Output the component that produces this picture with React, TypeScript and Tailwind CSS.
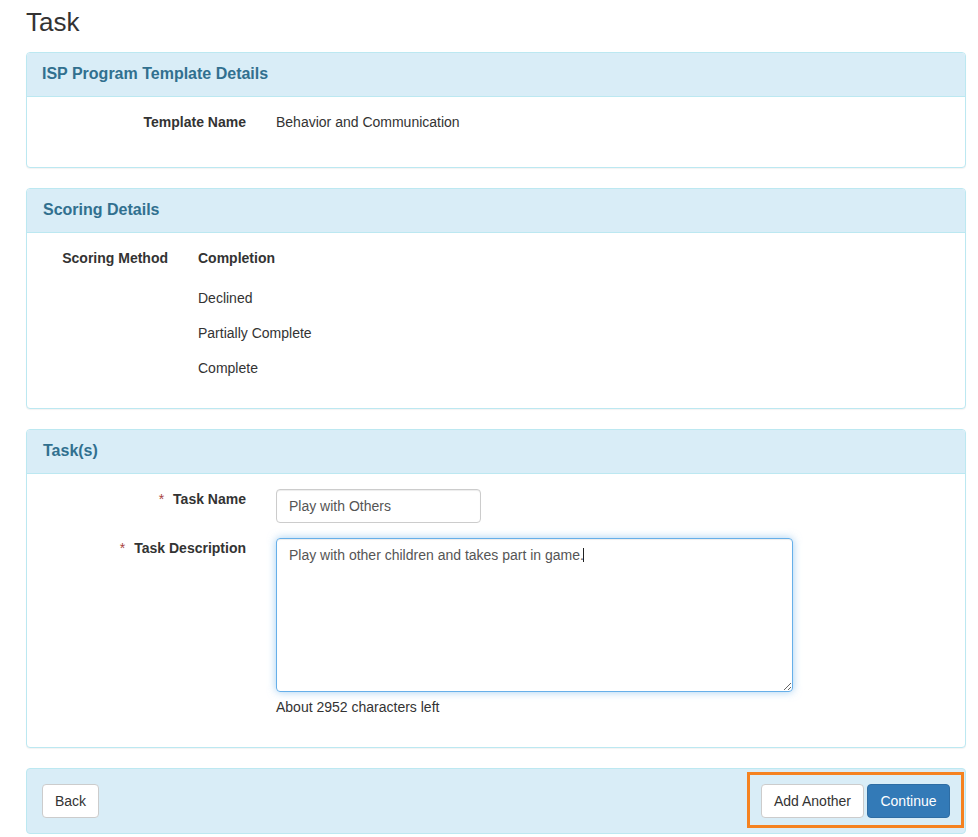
import { ReactNode } from 'react';

const font = "font-['Liberation_Sans',Arial,sans-serif]";

function Panel({ title, className, titleClass, children }: { title: string; className?: string; titleClass?: string; children: ReactNode }) {
  return (
    <section className={`rounded border border-[#bce8f1] bg-white shadow-[0_1px_1px_rgba(0,0,0,0.05)] ${className ?? ''}`}>
      <h2 className={`h-[44px] rounded-t-[3px] border-b border-[#bce8f1] bg-[#d9edf7] pt-[11px] text-base leading-[20px] font-bold text-[#31708f] ${titleClass ?? 'pl-[15px]'}`}>
        {title}
      </h2>
      {children}
    </section>
  );
}

function Required() {
  return <span className="mr-[9px] font-normal text-[#a94442]">*</span>;
}

function Button({ children, primary, className }: { children: ReactNode; primary?: boolean; className?: string }) {
  return (
    <button
      type="button"
      className={`h-[34px] whitespace-nowrap rounded border text-sm ${
        primary ? 'border-[#2e6da4] bg-[#337ab7] text-white' : 'border-[#ccc] bg-white text-[#333]'
      } ${className ?? 'px-3'}`}
    >
      {children}
    </button>
  );
}

export default function App() {
  return (
    <div className={`${font} min-h-[837px] bg-white pl-[26px] pr-3 text-sm leading-[20px] text-[#333]`}>
      {/* Page title */}
      <h1 className="h-[52px] pt-[6px] text-[26px] leading-[32px] font-normal">Task</h1>

      {/* Template details */}
      <Panel title="ISP Program Template Details" className="h-[116px]">
        <div className="flex pt-[15px]">
          <div className="w-[219px] text-right font-bold">Template Name</div>
          <div className="ml-[30px]">Behavior and Communication</div>
        </div>
      </Panel>

      {/* Scoring */}
      <Panel title="Scoring Details" titleClass="pl-[16px]" className="mt-5 h-[221px]">
        <div className="flex pt-[15px]">
          <div className="w-[141px] text-right font-bold">Scoring Method</div>
          <div className="ml-[30px]">
            <div className="font-bold">Completion</div>
            <div className="mt-5 flex flex-col gap-[15px]">
              <div>Declined</div>
              <div>Partially Complete</div>
              <div>Complete</div>
            </div>
          </div>
        </div>
      </Panel>

      {/* Tasks */}
      <Panel title="Task(s)" titleClass="pl-[16px]" className="mt-5 h-[319px]">
        <div className="flex pt-[15px]">
          <div className="w-[219px] text-right font-bold">
            <Required />
            Task Name
          </div>
          <input
            readOnly
            value="Play with Others"
            className="ml-[30px] h-[34px] w-[205px] rounded border border-[#ccc] px-3 text-[#555] outline-none shadow-[inset_0_1px_1px_rgba(0,0,0,0.075)]"
          />
        </div>
        <div className="mt-[15px] flex">
          <div className="w-[219px] text-right font-bold">
            <Required />
            Task Description
          </div>
          <div className="ml-[30px]">
            <div className="relative">
              <textarea
                defaultValue="Play with other children and takes part in game."
                className="block h-[154px] w-[517px] rounded border border-[#66afe9] px-3 py-1.5 text-[#555] outline-none shadow-[inset_0_1px_1px_rgba(0,0,0,0.075),0_0_8px_rgba(102,175,233,0.6)]"
              />
              {/* text caret */}
              <span className="absolute left-[307px] top-[10px] h-[14px] w-px bg-[#222]" />
            </div>
            <div className="mt-[5px]">About 2952 characters left</div>
          </div>
        </div>
      </Panel>

      {/* Footer actions */}
      <div className="mt-5 flex h-[66px] items-center justify-between rounded border border-[#bce8f1] bg-[#d9edf7] pl-[15px] pr-px">
        <Button>Back</Button>
        <div className="mb-[2px] flex gap-[3px] border-[3px] border-[#f58220] pb-[7px] pl-[11px] pr-[11px] pt-[9px]">
          <Button className="w-[103px]">Add Another</Button>
          <Button primary className="w-[83px]">Continue</Button>
        </div>
      </div>
    </div>
  );
}
